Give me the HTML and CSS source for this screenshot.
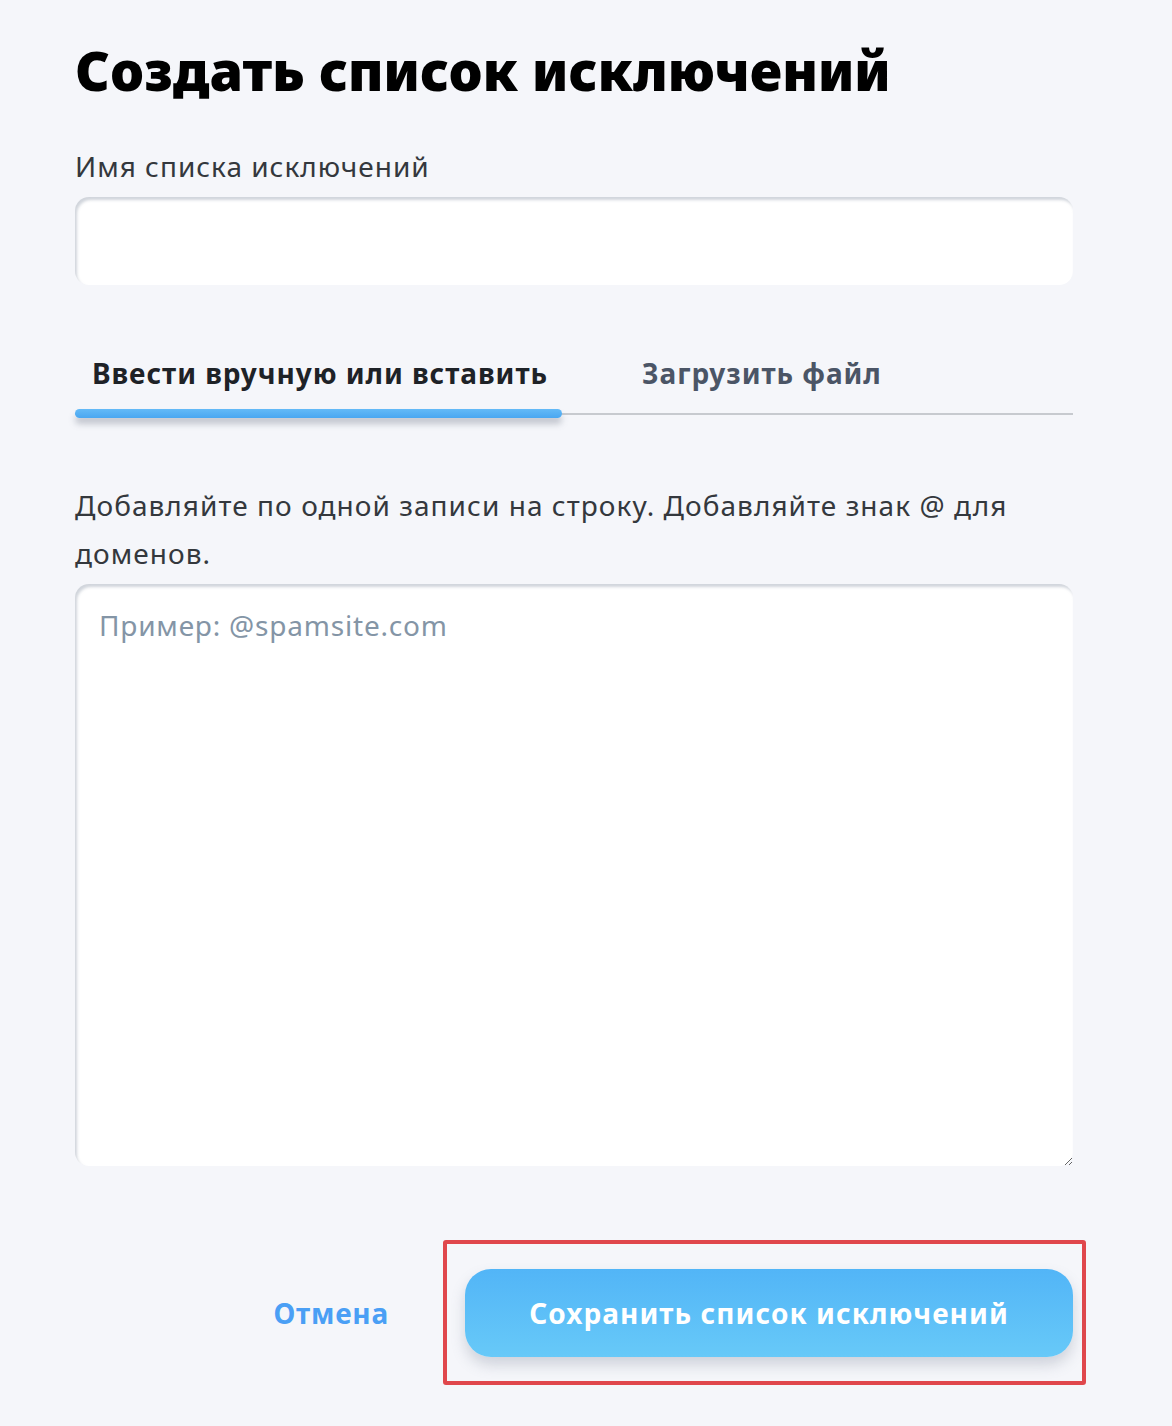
FILE: index.html
```html
<!DOCTYPE html>
<html lang="ru">
<head>
<meta charset="utf-8">
<link rel="stylesheet" href="styles.css">
</head>
<body>
<main class="page">
  <h1 class="title">Создать список исключений</h1>
  <label class="field-label" for="name">Имя списка исключений</label>
  <input class="text-input" id="name" type="text">
  <div class="tabs">
    <div class="tab tab-active">Ввести вручную или вставить</div>
    <div class="tab">Загрузить файл</div>
  </div>
  <p class="hint">Добавляйте по одной записи на строку. Добавляйте знак @ для доменов.</p>
  <textarea class="entries" placeholder="Пример: @spamsite.com"></textarea>
  <div class="actions">
    <button class="btn-cancel" type="button">Отмена</button>
    <div class="highlight">
      <button class="btn-save" type="button">Сохранить список исключений</button>
    </div>
  </div>
</main>
</body>
</html>
```

FILE: styles.css
```css
html, body {
  margin: 0;
  padding: 0;
  background: #f5f6fa;
}
body {
  font-family: "Noto Sans", "Open Sans", sans-serif;
  color: #2d3136;
}
.page {
  width: 998px;
  padding: 0 0 0 75px;
  display: flex;
  flex-direction: column;
}
.title {
  margin: 30px 0 0 0;
  font-size: 54px;
  font-weight: 900;
  line-height: 80px;
  color: #000;
  letter-spacing: 0;
}
.field-label {
  margin-top: 40px;
  font-size: 28px;
  line-height: 32px;
  color: #34383d;
  letter-spacing: 1px;
}
.text-input {
  margin-top: 15px;
  height: 88px;
  box-sizing: border-box;
  border: none;
  border-radius: 14px;
  background: #fff;
  box-shadow: inset 2px 3px 3px rgba(150, 160, 175, 0.45);
  outline: none;
  font: inherit;
}
.tabs {
  margin-top: 72px;
  display: flex;
  border-bottom: 2px solid #c7cacf;
  height: 58px;
  box-sizing: border-box;
}
.tab {
  font-size: 28px;
  font-weight: 700;
  line-height: 32px;
  color: #4b5566;
  padding: 0 0 0 17px;
  position: relative;
  letter-spacing: 0.95px;
}
.tab-active {
  width: 470px;
  color: #1e2227;
}
.tab-active::after {
  content: "";
  position: absolute;
  left: 0;
  right: 0;
  bottom: -5px;
  height: 9px;
  border-radius: 5px;
  background: linear-gradient(#64baf7, #4aa7f1);
  box-shadow: 0 6px 6px rgba(100, 110, 125, 0.35);
}
.tab + .tab {
  padding-left: 80px;
}
.hint {
  margin: 66px 0 0 0;
  font-size: 28px;
  line-height: 48px;
  color: #34383d;
  width: 990px;
  letter-spacing: 1.05px;
}
.entries {
  margin-top: 7px;
  height: 582px;
  box-sizing: border-box;
  border: none;
  border-radius: 14px;
  background: #fff;
  box-shadow: inset 2px 3px 3px rgba(150, 160, 175, 0.45);
  padding: 23px 24px;
  font-family: inherit;
  font-size: 28px;
  line-height: 36px;
  color: #333;
  outline: none;
  resize: vertical;
  letter-spacing: 0.8px;
}
.entries::placeholder {
  color: #8495a6;
}
.actions {
  margin-top: 74px;
  display: flex;
  justify-content: flex-end;
  align-items: center;
  gap: 54px;
  margin-right: -13px;
}
.btn-cancel {
  border: none;
  background: none;
  padding: 0;
  font-family: inherit;
  font-size: 28px;
  font-weight: 700;
  color: #4a9ff5;
  letter-spacing: 0.8px;
}
.highlight {
  border: 4px solid #e0474c;
  border-radius: 3px;
  padding: 25px 9px 24px 18px;
}
.btn-save {
  display: block;
  width: 608px;
  height: 88px;
  border: none;
  border-radius: 26px;
  background: linear-gradient(#52b5f7, #67c9f8);
  box-shadow: 0 8px 14px rgba(120, 130, 150, 0.3);
  color: #fff;
  font-family: inherit;
  font-size: 28px;
  font-weight: 700;
  letter-spacing: 1.07px;
}
```
